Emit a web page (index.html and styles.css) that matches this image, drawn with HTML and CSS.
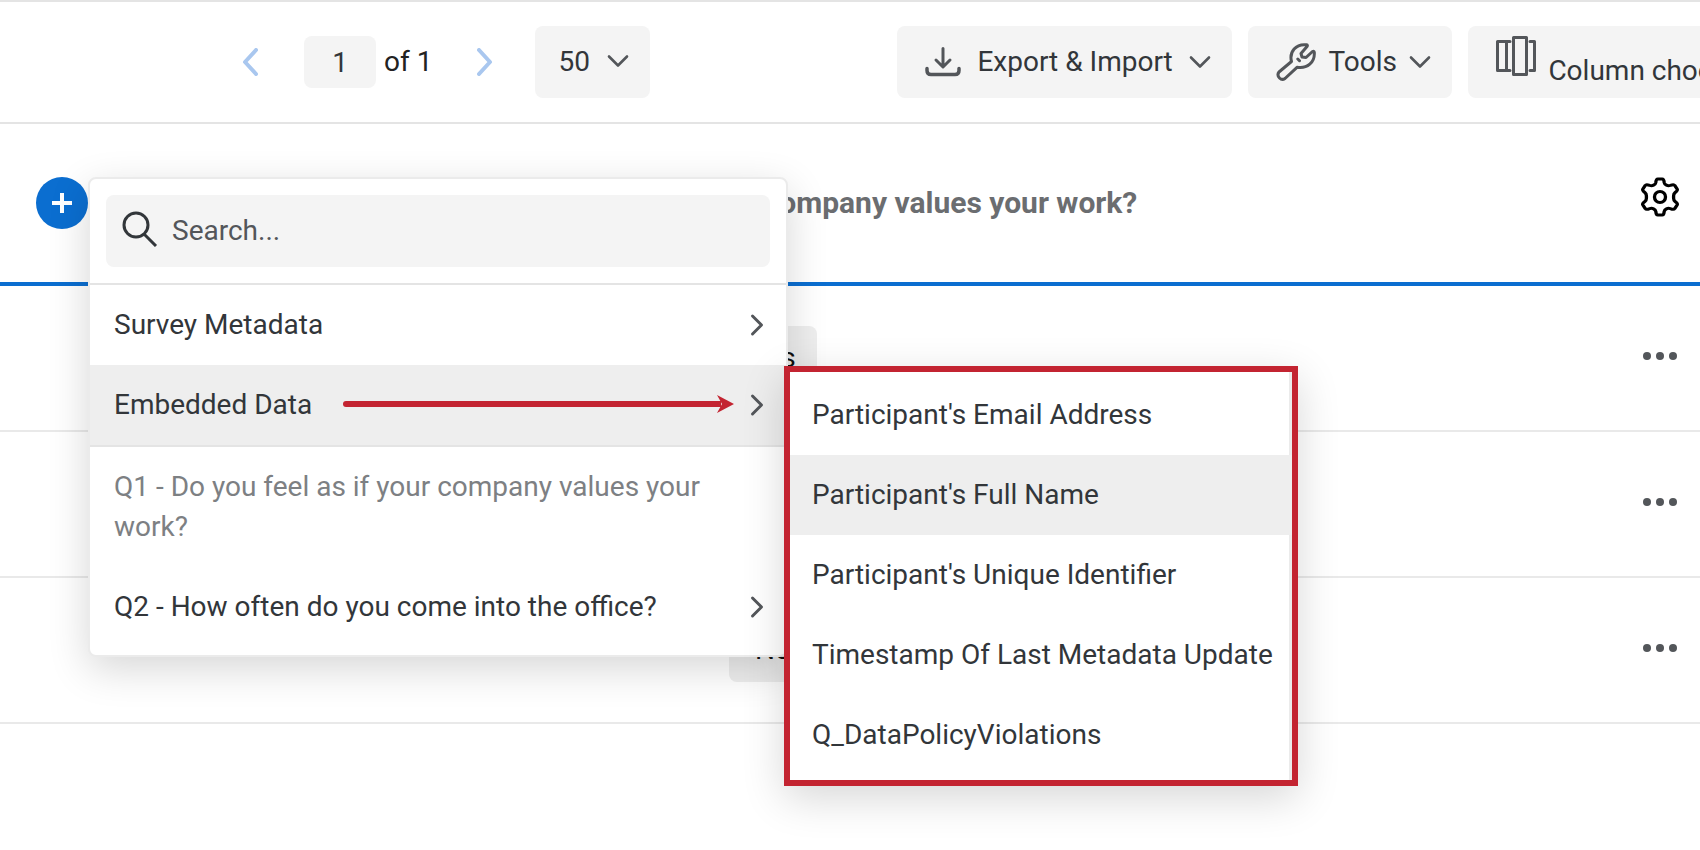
FILE: index.html
```html
<!DOCTYPE html>
<html lang="en">
<head>
<meta charset="utf-8">
<title>Responses</title>
<link rel="stylesheet" href="styles.css">
</head>
<body>
<svg class="defs" aria-hidden="true">
  <symbol id="down" viewBox="0 0 22 14"><path stroke-width="2.600" d="M2 2.500l9 9 9-9"/></symbol>
  <symbol id="right" viewBox="0 0 14 24"><path d="M2.500 3l9 9-9 9"/></symbol>
  <symbol id="dots" viewBox="0 0 34 8"><circle cx="4" cy="4" r="4"/><circle cx="17" cy="4" r="4"/><circle cx="30" cy="4" r="4"/></symbol>
</svg>
<header class="toolbar">
  <nav class="pager" aria-label="Pages">
    <button class="step" aria-label="Previous page"><svg width="16" height="28" viewBox="0 0 16 28"><path d="M14 2L3 14l11 12"/></svg></button>
    <label class="page"><input class="page-input" type="text" value="1" aria-label="Page"> of 1</label>
    <button class="step" aria-label="Next page"><svg width="16" height="28" viewBox="0 0 16 28"><path d="M2 2l11 12L2 26"/></svg></button>
    <div class="size">
      <select class="size-select" aria-label="Rows per page"><option>50</option></select>
      <svg class="line size-arrow" width="22" height="14"><use href="#down"/></svg>
    </div>
  </nav>
  <div class="actions">
    <button class="action action-export">
      <svg class="line" width="36" height="30" viewBox="0 0 36 30"><path d="M18 1.500v18M11 13l7 7 7-7"/><path stroke-width="3.500" d="M2 21.500v2q0 4 4 4h24q4 0 4-4v-2"/></svg>
      <span>Export &amp; Import</span>
      <svg class="line arrow" width="22" height="14"><use href="#down"/></svg>
    </button>
    <button class="action action-tools">
      <svg class="line" width="40" height="38" viewBox="0 0 40 38"><path d="M15.500 18.500C13 9 20 .5 30.500 1.800Q32 2.200 31 3.500L25 10.500l1 3.500 4 .5 6.500-6q1.500-.8 1.800.8c.7 10-7 16.700-17.300 15L9 35.500q-3 2-5.500-.5-2.800-3-.5-6zM21.800 16l1.700 1.700"/></svg>
      <span>Tools</span>
      <svg class="line arrow" width="22" height="14"><use href="#down"/></svg>
    </button>
    <button class="action action-columns">
      <svg class="line columns-icon" width="40" height="40" viewBox="0 0 40 40"><path d="M14 5.500H1.500v29H14M10.500 5.500v29M17.500 1.500h13v37h-13zM34 5.500h4.500v29H34"/></svg>
      <span class="columns-label">Column chooser</span>
      <svg class="line arrow" width="22" height="14"><use href="#down"/></svg>
    </button>
  </div>
</header>
<table class="responses">
  <thead>
    <tr>
      <th class="lead">
        <div class="adder">
          <button class="add" aria-label="Add column"><svg width="20" height="20" viewBox="0 0 20 20"><path d="M10 0v20M0 10h20"/></svg></button>
          <div class="menu">
            <div class="search">
              <label class="search-box">
                <svg class="search-icon" width="36" height="36" viewBox="0 0 36 36"><circle cx="14" cy="14" r="12"/><path d="M22 23l12 12"/></svg>
                <input class="search-input" type="text" placeholder="Search..." aria-label="Search">
              </label>
            </div>
            <ul class="list">
              <li><button class="item">Survey Metadata<svg class="line arrow" width="14" height="24"><use href="#right"/></svg></button></li>
              <li class="parent">
                <button class="item active">Embedded Data
                  <svg class="pointer" width="391" height="18" viewBox="0 0 391 18"><path d="M3 6h375v6H3a3 3 0 010-6z"/><path d="M374 0l17 9-17 9 5-9z"/></svg>
                  <svg class="line" width="14" height="24"><use href="#right"/></svg></button>
                <ul class="submenu">
                  <li><button class="item">Participant's Email Address</button></li>
                  <li><button class="item active">Participant's Full Name</button></li>
                  <li><button class="item">Participant's Unique Identifier</button></li>
                  <li><button class="item">Timestamp Of Last Metadata Update</button></li>
                  <li><button class="item">Q_DataPolicyViolations</button></li>
                </ul>
              </li>
            </ul>
            <ul class="list questions">
              <li><button class="item muted" disabled>Q1 - Do you feel as if your company values your work?</button></li>
              <li><button class="item">Q2 - How often do you come into the office?<svg class="line arrow" width="14" height="24"><use href="#right"/></svg></button></li>
            </ul>
          </div>
        </div>
      </th>
      <th class="question">Q1 - Do you feel as if your company values your work?</th>
      <th class="tail tail-head"><button class="plain" aria-label="Settings"><svg class="gear" width="42" height="40" viewBox="0 0 38 40" preserveAspectRatio="none"><path d="M15.200 5.500Q15.500 2 17 2h4q1.500 0 1.800 3.500.3 1.800 2 2.700t3.500.2q3.200-1.500 4 0l2.200 3.600q.8 1.400-1.800 3.500-1.400 1.200-1.400 3.200v2.600q0 2 1.400 3.200 2.600 2.100 1.800 3.500l-2.200 3.600q-.8 1.500-4 0-1.800-.7-3.500.2t-2 2.700Q22.500 38 21 38h-4q-1.500 0-1.800-3.500-.3-1.800-2-2.700t-3.500-.2q-3.200 1.500-4 0L3.500 28q-.8-1.400 1.800-3.500 1.400-1.200 1.400-3.200v-2.600q0-2-1.400-3.200Q2.700 13.400 3.500 12l2.200-3.600q.8-1.500 4 0 1.800.7 3.500-.2t2-2.700z"/><ellipse cx="19" cy="20" rx="5" ry="5.500"/></svg></button></th>
    </tr>
  </thead>
  <tbody>
    <tr><td></td><td class="answer"><span class="chip">Yes</span></td><td class="tail"><button class="plain" aria-label="Row actions"><svg class="dots" width="34" height="8"><use href="#dots"/></svg></button></td></tr>
    <tr><td></td><td class="answer"><span class="chip">Yes</span></td><td class="tail"><button class="plain" aria-label="Row actions"><svg class="dots" width="34" height="8"><use href="#dots"/></svg></button></td></tr>
    <tr><td></td><td class="answer"><span class="chip">No</span></td><td class="tail"><button class="plain" aria-label="Row actions"><svg class="dots" width="34" height="8"><use href="#dots"/></svg></button></td></tr>
  </tbody>
</table>
</body>
</html>
```
FILE: styles.css
```css
* { box-sizing: border-box; }
body {
  margin: 0;
  min-height: 100vh;
  overflow-x: hidden;
  background: #fff;
  color: #32363a;
  font: 28px/40px Roboto, "Liberation Sans", sans-serif;
}
button, input, select { font: inherit; color: inherit; border: 0; margin: 0; padding: 0; background: none; }
button { cursor: pointer; }
ul { list-style: none; margin: 0; padding: 0; }
svg { display: block; flex: none; }
.defs { position: absolute; width: 0; height: 0; }
.line { fill: none; stroke: #53565a; stroke-width: 3; stroke-linecap: round; stroke-linejoin: round; }
.arrow { margin-left: auto; }

.toolbar {
  display: flex;
  align-items: center;
  padding: 24px 0 24px 242px;
  border-top: 2px solid #e4e4e4;
  border-bottom: 2px solid #e4e4e4;
  overflow: hidden;
}
.pager { display: flex; align-items: center; flex: none; }
.step svg { fill: none; stroke: #a9c7ef; stroke-width: 4; stroke-linecap: round; stroke-linejoin: round; }
.page { display: flex; align-items: center; gap: 8px; margin: 0 45px 0 46px; color: #222; }
.page-input { width: 72px; height: 52px; border-radius: 8px; background: #f4f4f4; text-align: center; color: #32363a; }
.size { position: relative; margin-left: 42px; }
.size-select { display: block; appearance: none; width: 115px; height: 72px; padding-left: 23px; border-radius: 8px; background: #f4f4f4; }
.size-arrow { position: absolute; right: 21px; top: 28px; pointer-events: none; }
.actions { display: flex; gap: 16px; flex: none; margin-left: 247px; }
.action { display: flex; align-items: center; height: 72px; padding: 0 21px 0 28px; border-radius: 8px; background: #f4f4f4; white-space: nowrap; }
.action-export { width: 335px; gap: 16px; }
.action-tools { width: 204px; gap: 12px; }
.action-columns { width: 320px; gap: 12px; }
.columns-icon { margin-bottom: 12px; }
.columns-label { padding-top: 18px; }

.responses { width: 100%; border-spacing: 0; table-layout: fixed; }
th { height: 162px; padding: 0; border-bottom: 4px solid #0b6ed0; font-weight: 400; text-align: left; }
td { height: 146px; padding: 0; border-bottom: 2px solid #e9e9e9; }
.lead { width: 100px; padding-left: 36px; }
.question { font-size: 30px; font-weight: 700; text-align: center; color: #6b6d70; white-space: nowrap; }
.tail { width: 254px; padding: 0 23px 4px 0; }
.tail-head { padding: 0 19px 12px 0; }
.plain { display: block; margin-left: auto; }
.gear { fill: none; stroke: #000; stroke-width: 3; stroke-linejoin: round; }
.dots { fill: #53565a; }
.answer { text-align: center; }
.chip { display: inline-block; min-width: 88px; padding: 12px 20px; border-radius: 8px; background: #eee; color: #111; }

.adder { position: relative; width: 52px; }
.add { display: grid; place-items: center; width: 52px; height: 52px; border-radius: 50%; background: #0b6ed0; }
.add svg { stroke: #fff; stroke-width: 4; }
.menu {
  position: absolute;
  z-index: 1;
  left: 100%;
  top: 0;
  width: 700px;
  padding-bottom: 8px;
  border: 2px solid #ebebeb;
  border-radius: 8px;
  background: #fff;
  background-clip: padding-box;
  box-shadow: 0 12px 40px rgba(0, 0, 0, .16);
}
.search { padding: 16px; border-bottom: 2px solid #e4e4e4; }
.search-box { display: flex; align-items: center; gap: 14px; height: 72px; padding: 0 16px; border-radius: 8px; background: #f4f4f4; }
.search-icon { margin-bottom: 4px; fill: none; stroke: #32363a; stroke-width: 3; }
.search-input { flex: 1; min-width: 0; }
.search-input::placeholder { color: #53565a; opacity: 1; }
.item { display: flex; align-items: center; width: 100%; min-height: 80px; padding: 20px 22px 20px 24px; text-align: left; }
.active { background: #eee; }
.muted { padding-right: 64px; color: #7d8083; }
.questions { border-top: 2px solid #e4e4e4; }
.parent { position: relative; }
.pointer { margin: 0 16px 2px auto; fill: #c32431; }
.submenu {
  position: absolute;
  left: calc(100% - 2px);
  top: 1px;
  width: 514px;
  padding: 3px 0 5px;
  border: 6px solid #c32431;
  background: #fff;
  box-shadow: inset -3px 0 #ebebeb, 0 12px 40px rgba(0, 0, 0, .16);
}
.submenu .item { padding: 20px 22px; white-space: nowrap; }
```
